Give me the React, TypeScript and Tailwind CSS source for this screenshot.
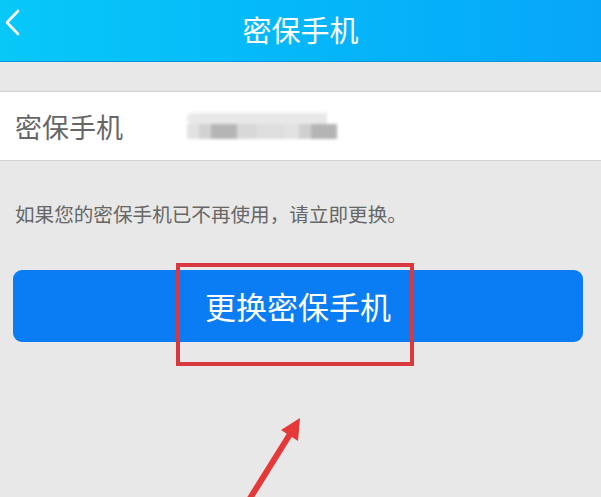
import React from "react";

const FONT = { fontFamily: '"Noto Sans CJK SC", "Noto Sans", sans-serif' };

// 打码后的手机号
const BLUR_BLOCKS = [
  { w: 12, c: "bg-[#e2e2e2]" },
  { w: 12, c: "bg-[#d2d2d2]" },
  { w: 26, c: "bg-[#b5b5b5]" },
  { w: 20, c: "bg-[#d8d8d8]" },
  { w: 28, c: "bg-[#dedede]" },
  { w: 14, c: "bg-[#e2e2e2]" },
  { w: 12, c: "bg-[#cfcfcf]" },
  { w: 26, c: "bg-[#b4b4b4]" },
];

export default function App() {
  return (
    <div className="relative w-[601px] h-[497px] overflow-hidden bg-[#e8e8e8]" style={FONT}>
      {/* 顶部导航 */}
      <div className="relative h-[62px] flex items-center justify-center bg-gradient-to-r from-[#08c8f8] to-[#08a6f9] border-b border-[#0996dd]">
        <svg className="absolute left-[4px] top-[9px]" width="16" height="27" viewBox="0 0 16 27" fill="none">
          <path d="M14 2 L3 13.5 L14 25" stroke="white" strokeWidth="2.6" strokeLinecap="round" strokeLinejoin="round" />
        </svg>
        <span className="text-white text-[29px] leading-none -mt-[2px]">密保手机</span>
      </div>

      {/* 密保手机行 */}
      <div className="mt-[29px] h-[70px] bg-white border-y border-[#d2d2d2] flex items-center px-[15px]">
        <span className="text-[#666666] text-[27px] leading-none w-[172px]">密保手机</span>
        <div className="flex flex-col gap-0 blur-[1.5px]">
          <div className="h-[11px] w-[140px] bg-[#e8e8e8] rounded-l-full" />
          <div className="flex h-[15px]">
            {BLUR_BLOCKS.map((b, i) => (
              <div key={i} className={b.c} style={{ width: b.w }} />
            ))}
          </div>
        </div>
      </div>

      {/* 提示 */}
      <div className="mt-[43px] px-[15px] text-[#666666] text-[19.6px] leading-none">
        如果您的密保手机已不再使用，请立即更换。
      </div>

      {/* 按钮 */}
      <div className="mt-[46px] px-[13px]">
        <button className="w-[570px] h-[72px] rounded-[9px] bg-[#0b7df4] text-white text-[31px] leading-none flex items-center justify-center">
          更换密保手机
        </button>
      </div>

      {/* 红框标注 */}
      <div className="absolute left-[176px] top-[263px] w-[238px] h-[103px] border-[4px] border-[#d8393f]" />

      {/* 红色箭头 */}
      <svg className="absolute left-0 top-0" width="601" height="497" viewBox="0 0 601 497" fill="none">
        <line x1="249" y1="500" x2="292" y2="431" stroke="#e53838" strokeWidth="6" />
        <polygon points="300,418 298,441 281,430" fill="#e53838" />
      </svg>
    </div>
  );
}
